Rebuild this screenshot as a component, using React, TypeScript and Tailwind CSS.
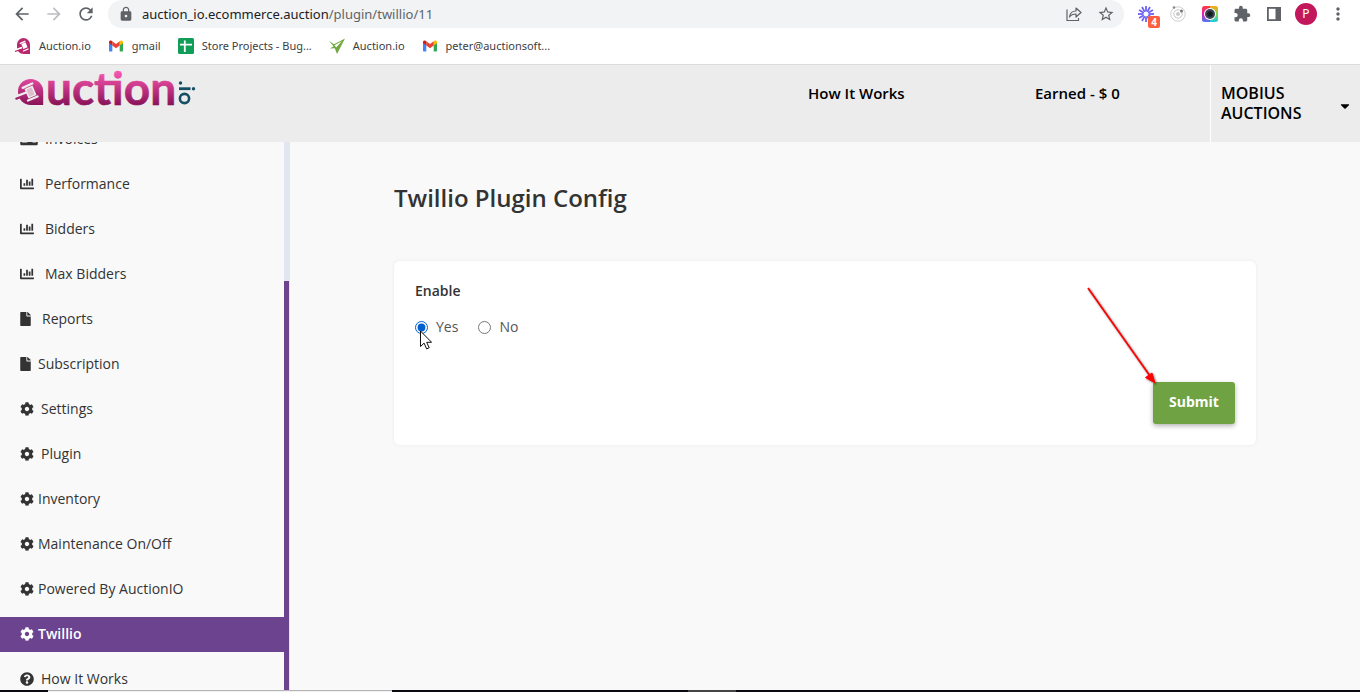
import type { ReactNode } from "react";
import type { IconType } from "react-icons";
import { FaChartBar, FaCog, FaFile, FaMoneyCheck, FaQuestionCircle, FaCaretDown } from "react-icons/fa";
import { MdArrowBack, MdArrowForward, MdRefresh, MdLock, MdStarOutline, MdExtension, MdMoreVert } from "react-icons/md";

function AuctionMark() {
  return (
    <svg className="size-4" viewBox="0 0 16 16" aria-hidden="true">
      <path d="M2 6.500a6.500 6.500 0 0 1 13 0V16H9C4.500 16 2 13 2 9z" fill="#b8286f" />
      <path d="M0 12.300L7 9.500" stroke="#fff" strokeWidth="1.800" />
      <path d="M0 13.500L6 11.500" stroke="#b8286f" strokeWidth="1.200" />
      <path d="M6.300 6l4.200-1.800 2 5-4.200 1.800z" fill="#fff" />
      <path d="M5.300 5.300l4.500-2M8.500 13l4.500-2" stroke="#fff" strokeWidth="1.300" strokeLinecap="round" />
    </svg>
  );
}

function GmailMark() {
  return (
    <svg className="size-4" viewBox="0 0 16 16" aria-hidden="true">
      <path d="M1 4.500v8c0 .6.400 1 1 1h2.300V7z" fill="#4285f4" />
      <path d="M11.700 13.500H14c.6 0 1-.4 1-1v-8L11.700 7z" fill="#34a853" />
      <path d="M11.700 3.200V7.400L15 5V4c0-1.500-1.500-2-2.500-1.300z" fill="#fbbc04" />
      <path d="M4.300 7.400V3.200L8 6l3.700-2.800v4.200L8 10.200z" fill="#ea4335" />
      <path d="M1 4v1l3.300 2.400V3.200l-.8-.5C2.500 2 1 2.500 1 4z" fill="#c5221f" />
    </svg>
  );
}

function SheetMark() {
  return (
    <svg className="size-4" viewBox="0 0 16 16" aria-hidden="true">
      <rect width="16" height="16" rx="1.500" fill="#0f9d58" />
      <path d="M2 6.700h12M6.800 2.500v11.500" stroke="#fff" strokeWidth="1.800" />
    </svg>
  );
}

function DartMark() {
  return (
    <svg className="size-4" viewBox="0 0 16 16" aria-hidden="true">
      <path d="M0 3l5 3.200L16 .5 8 16 5.800 10.200 1 10.500l3.600-2.200z" fill="#6fa83c" />
      <path d="M5.500 7.300L13 3 7.200 9.500z" fill="#fff" />
    </svg>
  );
}

const bookmarks: { label: string; mark: ReactNode }[] = [
  { label: "Auction.io", mark: <AuctionMark /> },
  { label: "gmail", mark: <GmailMark /> },
  { label: "Store Projects - Bug...", mark: <SheetMark /> },
  { label: "Auction.io", mark: <DartMark /> },
  { label: "peter@auctionsoft...", mark: <GmailMark /> },
];

function BurstIcon() {
  const angles = [0, 30, 60, 90, 120, 150, 180, 210, 240, 270, 300, 330];
  return (
    <svg className="size-4" viewBox="0 0 16 16" aria-hidden="true">
      {angles.map((a) => (
        <path key={a} d="M8 0V5.500" stroke="#6c63f5" strokeWidth="1.800" transform={`rotate(${a} 8 8)`} />
      ))}
    </svg>
  );
}

function OrbitIcon() {
  return (
    <svg className="size-4" viewBox="0 0 16 16" fill="none" aria-hidden="true">
      <circle cx="8" cy="8" r="7.200" stroke="#cfcfcf" />
      <circle cx="8" cy="8" r="4.200" stroke="#c4c4c4" />
      <circle cx="8" cy="8" r="2" fill="#c9c9c9" />
      <circle cx="4" cy="1.500" r="1.300" fill="#888" />
      <circle cx="11.500" cy="5" r="1.500" fill="#777" />
    </svg>
  );
}

function CameraIcon() {
  return (
    <svg className="size-4" viewBox="0 0 16 16" aria-hidden="true">
      <defs>
        <linearGradient id="lens-left" x1="0" y1="0" x2="0" y2="1">
          <stop offset="0" stopColor="#ff3d3d" />
          <stop offset="0.500" stopColor="#e01fb8" />
          <stop offset="1" stopColor="#4b7bf5" />
        </linearGradient>
        <linearGradient id="lens-right" x1="0" y1="0" x2="0" y2="1">
          <stop offset="0" stopColor="#ffa31a" />
          <stop offset="0.500" stopColor="#7ddc4a" />
          <stop offset="1" stopColor="#1fc9e6" />
        </linearGradient>
      </defs>
      <path d="M8 0H2.500A2.500 2.500 0 0 0 0 2.500v11A2.500 2.500 0 0 0 2.500 16H8z" fill="url(#lens-left)" />
      <path d="M8 0h5.500A2.500 2.500 0 0 1 16 2.500v11a2.500 2.500 0 0 1-2.500 2.500H8z" fill="url(#lens-right)" />
      <circle cx="8" cy="8" r="6" fill="#fff" />
      <circle cx="8" cy="8" r="5" fill="#3b4652" />
      <circle cx="8" cy="8" r="2.800" fill="#141c26" />
    </svg>
  );
}

function ShareIcon() {
  return (
    <svg className="size-4" viewBox="0 0 16 16" fill="none" stroke="#5f6368" strokeWidth="1.200" aria-hidden="true">
      <path d="M1 3.500v11h11.500v-2.500" />
      <path d="M3.500 11c.5-4 3-6 6.500-6V2l5 4.500-5 4.500V8c-3 0-5 .8-6.500 3z" strokeLinejoin="round" />
    </svg>
  );
}

function PanelIcon() {
  return (
    <svg className="size-4" viewBox="0 0 16 16" aria-hidden="true">
      <rect x="1.900" y="1.900" width="12.200" height="12.200" fill="none" stroke="#5f6368" strokeWidth="1.800" />
      <path d="M9.500 1h5.500v14H9.500z" fill="#5f6368" />
    </svg>
  );
}

function ToolButton({ label, children }: { label: string; children: ReactNode }) {
  return (
    <button type="button" aria-label={label} className="relative flex size-8 items-center justify-center text-[#5f6368]">
      {children}
    </button>
  );
}

function BrowserBar() {
  return (
    <div className="shrink-0 border-b border-[#dcdcdc] bg-white font-['Noto_Sans','Open_Sans',sans-serif]">
      <div className="flex h-7 items-center pr-1.5 pl-1.5">
        <ToolButton label="Back"><MdArrowBack className="size-5" /></ToolButton>
        <ToolButton label="Forward"><MdArrowForward className="size-5 text-[#bcbec1]" /></ToolButton>
        <ToolButton label="Reload"><MdRefresh className="size-5" /></ToolButton>
        <div className="ml-1.5 flex h-7 min-w-0 flex-1 items-center rounded-full bg-[#f1f3f4] pr-0.5 pl-2.5">
          <MdLock className="size-4 shrink-0 text-[#5f6368]" />
          <p className="ml-2 flex-1 truncate text-[13px] leading-5 text-[#5f6368]">
            <span className="text-[#202124]">auction_io.ecommerce.auction</span>/plugin/twillio/11
          </p>
          <ToolButton label="Share"><ShareIcon /></ToolButton>
          <ToolButton label="Bookmark"><MdStarOutline className="size-[18px]" /></ToolButton>
        </div>
        <div className="ml-1.5 flex items-center">
          <ToolButton label="Shortcuts">
            <BurstIcon />
            <span className="absolute top-[18px] right-0.5 flex size-3 items-center justify-center rounded-xs bg-[#ff5f3d] text-[10px] font-bold text-white">4</span>
          </ToolButton>
          <ToolButton label="Orbit"><OrbitIcon /></ToolButton>
          <ToolButton label="Capture"><CameraIcon /></ToolButton>
          <ToolButton label="Extensions"><MdExtension className="size-[18px]" /></ToolButton>
          <ToolButton label="Side panel"><PanelIcon /></ToolButton>
          <ToolButton label="Profile">
            <span className="flex size-[22px] items-center justify-center rounded-full bg-[#c2185b] text-xs text-white">P</span>
          </ToolButton>
          <ToolButton label="More"><MdMoreVert className="size-5" /></ToolButton>
        </div>
      </div>
      <nav aria-label="Bookmarks" className="flex h-9 items-center gap-[17px] pl-[15px]">
        {bookmarks.map((b, i) => (
          <a key={i} href="#" className="flex items-center gap-2 text-[11px] whitespace-nowrap text-[#3c4043]">
            {b.mark}
            {b.label}
          </a>
        ))}
      </nav>
    </div>
  );
}

function Logo() {
  return (
    <svg className="h-10 w-[184px] overflow-visible" viewBox="0 0 184 40" role="img" aria-label="auction.io">
      <defs>
        <linearGradient id="pink" gradientUnits="userSpaceOnUse" x1="0" y1="1" x2="0" y2="35">
          <stop offset="0" stopColor="#f656b2" />
          <stop offset="0.350" stopColor="#d23e90" />
          <stop offset="1" stopColor="#851055" />
        </linearGradient>
      </defs>
      <path d="M6 20.500A12.500 12.500 0 0 1 31.200 20.500V34H19C11.500 34 6 28.500 6 20.500z" fill="url(#pink)" />
      <path d="M3 26.500L15 22" stroke="#ececec" strokeWidth="3.600" />
      <path d="M3.500 28L15 23.500" stroke="url(#pink)" strokeWidth="2" />
      <path d="M12.500 18l8-3.500 4 9.500-8 3.500z" fill="#ececec" />
      <path d="M14.500 18.800l5-2.200 3 7-5 2.200z" fill="#b7306f" opacity="0.250" />
      <path d="M10.700 16.800l9.500-4.300M16 29.500l9.500-4" stroke="#ececec" strokeWidth="2.400" strokeLinecap="round" />
      <text x="34" y="33.500" fontFamily="Lato" fontWeight="bold" fontSize="46" fill="url(#pink)" stroke="url(#pink)" strokeWidth="0.600">uction</text>
      <g fill="#154f63">
        <circle cx="168.500" cy="12" r="1.700" />
        <rect x="167" y="16.300" width="11.500" height="2.800" />
        <circle cx="181.500" cy="17.700" r="1.700" />
      </g>
      <circle cx="172.500" cy="27.500" r="4.600" fill="none" stroke="#154f63" strokeWidth="2.600" />
    </svg>
  );
}

function SiteHeader() {
  return (
    <header className="flex h-[77px] shrink-0 bg-[#ececec] leading-5 font-semibold text-black">
      <a href="#" className="mt-1.5 ml-3"><Logo /></a>
      <nav aria-label="Site" className="ml-auto flex pt-[18px] text-[15px]">
        <a href="#" className="w-[227px]">How It Works</a>
        <p className="w-[175px]">Earned - $ 0</p>
      </nav>
      <button type="button" className="flex w-[150px] items-start justify-between border-l border-white px-2.5 pt-[18px] text-left">
        <span className="w-24">MOBIUS AUCTIONS</span>
        <FaCaretDown className="mt-4 -mr-0.5 size-3.5" />
      </button>
    </header>
  );
}

const menu: { label: string; icon: IconType; gap: string; iconClass: string; active?: boolean }[] = [
  { label: "Invoices", icon: FaMoneyCheck, gap: "gap-[7px]", iconClass: "h-3.5 w-[18px]" },
  { label: "Performance", icon: FaChartBar, gap: "gap-[11px]", iconClass: "size-3.5" },
  { label: "Bidders", icon: FaChartBar, gap: "gap-[11px]", iconClass: "size-3.5" },
  { label: "Max Bidders", icon: FaChartBar, gap: "gap-[11px]", iconClass: "size-3.5" },
  { label: "Reports", icon: FaFile, gap: "gap-[11px]", iconClass: "h-3.5 w-[11px]" },
  { label: "Subscription", icon: FaFile, gap: "gap-[7px]", iconClass: "h-3.5 w-[11px]" },
  { label: "Settings", icon: FaCog, gap: "gap-[7px]", iconClass: "size-3.5" },
  { label: "Plugin", icon: FaCog, gap: "gap-[7px]", iconClass: "size-3.5" },
  { label: "Inventory", icon: FaCog, gap: "gap-1", iconClass: "size-3.5" },
  { label: "Maintenance On/Off", icon: FaCog, gap: "gap-1", iconClass: "size-3.5" },
  { label: "Powered By AuctionIO", icon: FaCog, gap: "gap-1", iconClass: "size-3.5" },
  { label: "Twillio", icon: FaCog, gap: "gap-1", iconClass: "size-3.5", active: true },
  { label: "How It Works", icon: FaQuestionCircle, gap: "gap-[7px]", iconClass: "size-3.5" },
];

function Sidebar() {
  return (
    <aside className="flex w-[290px] shrink-0 overflow-hidden">
      <ul className="-mt-5 flex flex-1 flex-col gap-2.5">
        {menu.map(({ label, icon: Icon, gap, iconClass, active }) => (
          <li key={label}>
            <a
              href="#"
              className={`flex h-[35px] items-center pb-0.5 pl-5 text-sm ${gap} ${active ? "bg-[#6c438f] font-semibold text-white" : "text-[#333]"}`}
            >
              <Icon className={iconClass} />
              {label}
            </a>
          </li>
        ))}
      </ul>
      <div className="flex w-1.5 flex-col bg-[#e2e6f0] pt-[139px]">
        <div className="w-[5px] flex-1 bg-[#6c438f]" />
      </div>
    </aside>
  );
}

function PluginForm() {
  return (
    <main className="flex-1 px-[104px] pt-[38px]">
      <h1 className="text-2xl leading-9 font-semibold text-[#333]">Twillio Plugin Config</h1>
      <form className="relative mt-[45px] rounded-md bg-white px-[21px] pt-[18px] pb-[21px] shadow-[0_0_4px_rgba(0,0,0,0.06)]" onSubmit={(e) => e.preventDefault()}>
        <fieldset className="text-[#333]">
          <legend className="text-sm leading-6 font-semibold">Enable</legend>
          <div className="mt-3.5 flex h-5 items-center gap-5 text-sm text-[#555]">
            <label className="flex items-center gap-2">
              <input type="radio" name="enable" defaultChecked className="size-[13px] accent-[#0060d0]" />
              Yes
            </label>
            <label className="flex items-center gap-2">
              <input type="radio" name="enable" className="size-[13px]" />
              No
            </label>
          </div>
        </fieldset>
        <div className="mt-[45px] flex justify-end">
          <button type="submit" className="h-[42px] w-[82px] rounded-[3px] bg-[#6fa242] pb-0.5 text-sm font-bold text-white shadow-[0_2px_5px_rgba(0,0,0,0.3)]">
            Submit
          </button>
        </div>
        <svg className="absolute top-[69px] left-[26px] h-5 w-3" viewBox="0 0 12 20" aria-hidden="true">
          <path d="M.5 1v15.500l3.600-3.400 2.500 5.800 2.600-1.100-2.500-5.500h4.900z" fill="#fff" stroke="#111" strokeWidth="1" />
        </svg>
        <svg className="absolute top-[25px] right-[97px] h-[100px] w-[72px] drop-shadow-[1px_1px_1px_rgba(0,0,0,0.5)]" viewBox="0 0 72 100" aria-hidden="true">
          <path d="M1 2l62 88" stroke="#f00" strokeWidth="1.800" />
          <path d="M68 97L58.500 91.500 65 87z" fill="#f00" stroke="#f00" strokeWidth="1" />
        </svg>
      </form>
    </main>
  );
}

function TaskbarEdge() {
  return (
    <div className="flex h-0.5 shrink-0 bg-[#080a10]">
      <div className="ml-12 w-[344px] border-t border-[#b5b5b5] bg-[#f0f0f0]" />
      <div className="ml-[296px] w-12 bg-[#444]" />
    </div>
  );
}

export default function App() {
  return (
    <div className="flex h-screen flex-col overflow-hidden bg-[#f9f9f9] font-['Open_Sans',sans-serif]">
      <BrowserBar />
      <SiteHeader />
      <div className="flex min-h-0 flex-1">
        <Sidebar />
        <PluginForm />
      </div>
      <TaskbarEdge />
    </div>
  );
}
